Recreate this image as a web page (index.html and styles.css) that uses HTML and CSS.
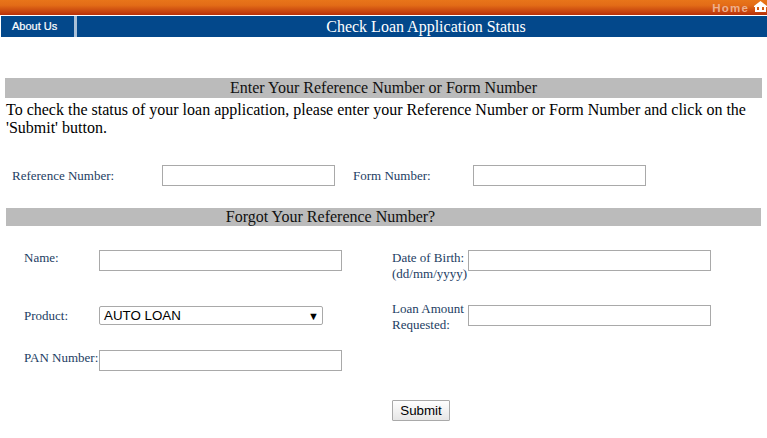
FILE: index.html
```html
<!DOCTYPE html>
<html lang="en">
<head>
<meta charset="utf-8">
<title>Check Loan Application Status</title>
<link rel="stylesheet" href="styles.css">
</head>
<body>
<header class="top-bar">
  <a class="home-link">Home</a>
  <svg class="home-icon" width="13" height="11" viewBox="0 0 13 11"><path fill="#fff" d="M6.5 0 13 5v1h-1v5H1V6H0V5zM3 6v3h2V6zm5 0v3h2V6z"/></svg>
</header>
<nav class="nav-bar">
  <a class="nav-tab">About Us</a>
  <h1 class="page-title">Check Loan Application Status</h1>
</nav>
<main class="content">
  <h2 class="section-bar section-first">Enter Your Reference Number or Form Number</h2>
  <p class="intro">To check the status of your loan application, please enter your Reference Number or Form Number and click on the 'Submit' button.</p>
  <div class="ref-row">
    <label class="field-label">Reference Number:</label>
    <input class="text-input" type="text">
    <label class="field-label form-label">Form Number:</label>
    <input class="text-input" type="text">
  </div>
  <h2 class="section-bar section-second"><span class="forgot-title">Forgot Your Reference Number?</span></h2>
  <div class="forgot-grid">
    <label class="field-label">Name:</label>
    <input class="text-input" type="text">
    <span></span>
    <label class="field-label">Date of Birth:<br>(dd/mm/yyyy)</label>
    <input class="text-input" type="text">

    <label class="field-label label-product">Product:</label>
    <div class="select-box"><span>AUTO LOAN</span><span class="arrow">▼</span></div>
    <span></span>
    <label class="field-label label-amount">Loan Amount<br>Requested:</label>
    <input class="text-input" type="text">

    <label class="field-label">PAN Number:</label>
    <input class="text-input" type="text">
    <span></span><span></span><span></span>

    <span></span><span></span><span></span>
    <button class="submit-btn" type="button">Submit</button>
  </div>
</main>
</body>
</html>
```
FILE: styles.css
```css
* { box-sizing: border-box; }
html, body { margin: 0; padding: 0; background: #fff; }
body {
  font-family: "Liberation Serif", "Times New Roman", serif;
  font-size: 16px;
  color: #000;
}
.top-bar {
  height: 15px;
  background: linear-gradient(#e8751a, #e36c17 35%, #b8300a);
  display: flex;
  justify-content: flex-end;
  align-items: center;
  gap: 5px;
  margin-bottom: 1px;
}
.home-link {
  font-family: "Liberation Sans", Arial, sans-serif;
  font-size: 11.5px;
  font-weight: bold;
  letter-spacing: 1.2px;
  color: #eeb08c;
}
.home-icon { flex: none; margin-top: -2px; }
.nav-bar {
  height: 21px;
  margin-left: 1px;
  background: #03488b;
  display: flex;
  align-items: center;
}
.nav-tab {
  width: 76px;
  height: 100%;
  border-right: 3px solid #a9c0d8;
  padding-left: 11px;
  font-family: "Liberation Sans", Arial, sans-serif;
  font-size: 11px;
  line-height: 20px;
  color: #fff;
  -webkit-text-stroke: 0.2px #fff;
}
.page-title {
  flex: 1;
  margin: 0;
  padding-left: 8px;
  text-align: center;
  font-size: 16px;
  font-weight: normal;
  line-height: 20px;
  color: #fff;
}
.section-bar {
  margin: 0;
  background: #bbb;
  font-size: 16px;
  font-weight: normal;
  text-align: center;
  color: #111;
}
.section-first {
  margin: 41px 5px 0;
  height: 20px;
  line-height: 20px;
}
.intro {
  margin: 3px 6px 0;
  line-height: 18px;
}
.ref-row {
  display: grid;
  grid-template-columns: 150px 173px 138px 173px;
  align-items: center;
  margin: 28px 0 0 12px;
  height: 21px;
}
.form-label { padding-left: 18px; }
.field-label {
  font-size: 13px;
  line-height: 16px;
  color: #1c3d63;
}
.text-input {
  width: 100%;
  height: 21px;
  border: 1px solid #a9a9a9;
  background: #fff;
  padding: 0;
  margin: 0;
}
.section-second {
  margin: 22px 6px 0;
  height: 18px;
  line-height: 18px;
}
.forgot-title { display: inline-block; padding-right: 106px; }
.forgot-grid {
  display: grid;
  grid-template-columns: 75px 243px 50px 76px 243px;
  grid-template-rows: 55px 45px 50px 21px;
  align-items: start;
  margin: 24px 0 0 24px;
}
.select-box {
  width: 224px;
  height: 19px;
  margin-top: 1px;
  border: 1px solid #a9a9a9;
  border-radius: 2px;
  padding: 0 3px 0 4px;
  display: flex;
  justify-content: space-between;
  align-items: center;
  font-family: "Liberation Sans", Arial, sans-serif;
  font-size: 13.33px;
  color: #000;
}
.arrow { font-size: 11px; }
.label-product { padding-top: 3px; }
.label-amount { margin-top: -4px; }
.submit-btn {
  width: 58px;
  height: 21px;
  padding: 0;
  border: 1px solid #a9a9a9;
  border-radius: 1px;
  background: linear-gradient(#fefefe, #e6e6e6);
  font-family: "Liberation Sans", Arial, sans-serif;
  font-size: 13.33px;
  color: #000;
}
```
